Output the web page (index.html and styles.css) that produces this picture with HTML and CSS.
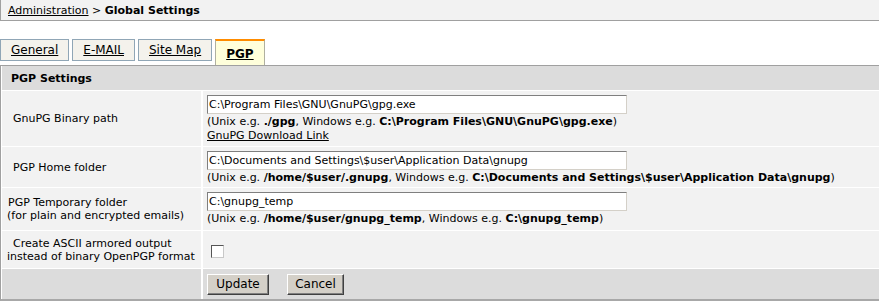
FILE: index.html
```html
<!DOCTYPE html>
<html lang="en">
<head>
    <meta charset="UTF-8">
    <title>Global Settings - PGP</title>
    <link rel="stylesheet" href="styles.css">
</head>
<body>
    <div class="crumb">
        <a href="#">Administration</a> &gt; <b>Global Settings</b>
    </div>

    <div class="tabs">
        <a class="tab" href="#">General</a>
        <a class="tab" href="#">E-MAIL</a>
        <a class="tab" href="#">Site Map</a>
        <a class="tab active" href="#">PGP</a>
    </div>

    <div class="panel">
        <div class="form">
            <div class="head">PGP Settings</div>

            <div class="label lead">GnuPG Binary path</div>
            <div class="value">
                <input class="text" type="text" value="C:\Program Files\GNU\GnuPG\gpg.exe">
                <div class="hint">(Unix e.g. <b>./gpg</b>, Windows e.g. <b>C:\Program Files\GNU\GnuPG\gpg.exe</b>)</div>
                <a class="hint" href="#">GnuPG Download Link</a>
            </div>

            <div class="label lead">PGP Home folder</div>
            <div class="value">
                <input class="text" type="text" value="C:\Documents and Settings\$user\Application Data\gnupg">
                <div class="hint">(Unix e.g. <b>/home/$user/.gnupg</b>, Windows e.g. <b>C:\Documents and Settings\$user\Application Data\gnupg</b>)</div>
            </div>

            <div class="label nudge">PGP Temporary folder<br>(for plain and encrypted emails)</div>
            <div class="value">
                <input class="text" type="text" value="C:\gnupg_temp">
                <div class="hint">(Unix e.g. <b>/home/$user/gnupg_temp</b>, Windows e.g. <b>C:\gnupg_temp</b>)</div>
            </div>

            <div class="label lead">Create ASCII armored output<br>instead of binary OpenPGP format</div>
            <div class="value middle">
                <input class="check" type="checkbox">
            </div>

            <div class="foot-label"></div>
            <div class="foot">
                <button class="btn btn-update">Update</button>
                <button class="btn btn-cancel">Cancel</button>
            </div>
        </div>
    </div>
</body>
</html>
```

FILE: styles.css
```css
/* Page */
body {
    margin: 0;
    padding: 0;
    font-family: 'DejaVu Sans', Verdana, sans-serif;
    font-size: 11px;
    color: #000;
    background: #fff;
}

a {
    color: #000;
    text-decoration: underline;
}

/* Breadcrumb bar */
.crumb {
    height: 20px;
    line-height: 21px;
    padding-left: 7px;
    background: #f2f2f2;
    border-left: 1px solid #a0a0a0;
    border-bottom: 1px solid #a0a0a0;
}

/* Tabs */
.tabs {
    display: flex;
    align-items: flex-start;
    gap: 3px;
    height: 26px;
    margin-top: 18px;
}

.tab {
    display: block;
    height: 20px;
    line-height: 21px;
    padding: 0 10px;
    font-size: 12px;
    background: #f4f2ec;
    border: 1px solid #90a6b6;
}

.tab.active {
    height: 24px;
    line-height: 27px;
    font-weight: bold;
    background: #ffffdb;
    border-color: #b0b0a0;
    border-top: 2px solid #ff8c00;
    border-bottom: 0;
}

/* Settings panel */
.panel {
    border-left: 1px solid #a0a0a0;
    border-top: 1px solid #a0a0a0;
    border-bottom: 2px solid #a8a8a8;
}

.form {
    display: grid;
    grid-template-columns: 199px 1fr;
    grid-template-rows: 24px 55px 40px 42px 37px 30px;
    gap: 1px 2px;
    padding-left: 1px;
    background: #fff;
}

.head {
    grid-column: 1 / -1;
    display: flex;
    align-items: center;
    padding-left: 9px;
    font-weight: bold;
    background: #dcdcdc;
}

.label {
    display: flex;
    align-items: center;
    padding-left: 5px;
    line-height: 13px;
    background: #f2f2f2;
}

.label.lead {
    text-indent: 6px;
}

.label.nudge {
    text-indent: 1px;
}

.value {
    padding: 4px 4px 0;
    line-height: 13px;
    background: #f2f2f2;
}

.value.middle {
    display: flex;
    align-items: center;
}

.hint {
    display: block;
    margin-top: 1px;
}

.text {
    display: block;
    box-sizing: border-box;
    width: 420px;
    height: 19px;
    margin: 0;
    padding: 1px 1px;
    font-family: 'DejaVu Sans', Verdana, sans-serif;
    font-size: 11px;
    color: #000;
    background: #fff;
    border: 1px solid;
    border-color: #7f7f7f #d4d0c8 #d4d0c8 #7f7f7f;
    outline: none;
}

.check {
    -webkit-appearance: none;
    appearance: none;
    width: 13px;
    height: 13px;
    margin: 0 0 0 4px;
    background: #fff;
    border: 1px solid;
    border-color: #555 #c8c8c8 #c8c8c8 #555;
}

/* Buttons */
.foot-label,
.foot {
    background: #dcdcdc;
}

.foot {
    display: flex;
    align-items: center;
    gap: 18px;
    padding-left: 4px;
}

.btn {
    height: 21px;
    padding: 0;
    font-family: 'DejaVu Sans', Verdana, sans-serif;
    font-size: 12px;
    color: #000;
    background: #d4d0c8;
    border: 1px solid;
    border-color: #fff #404040 #404040 #fff;
    box-shadow: inset -1px -1px 0 #808080;
    border-radius: 0;
}

.btn-update {
    width: 62px;
}

.btn-cancel {
    width: 57px;
}
```
